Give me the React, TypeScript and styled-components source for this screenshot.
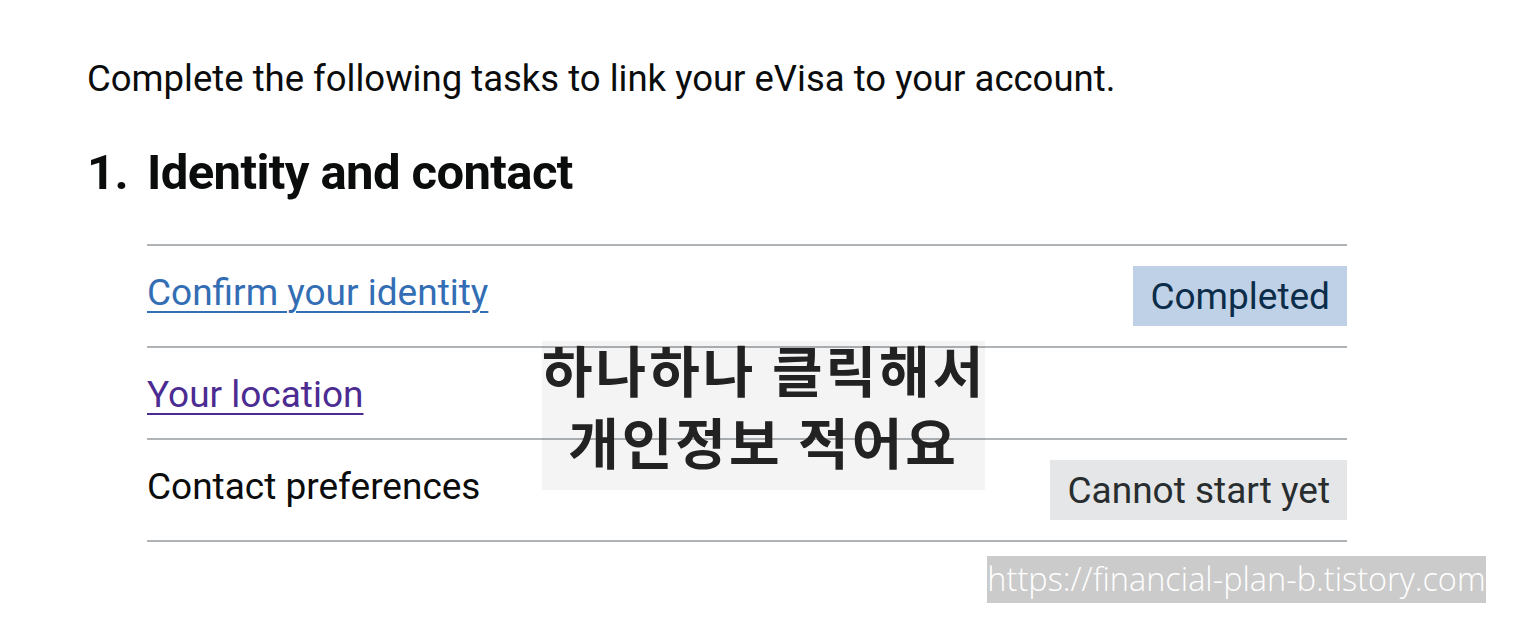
import React from 'react'
import styled, { createGlobalStyle } from 'styled-components'

const GlobalStyle = createGlobalStyle`
  html, body {
    margin: 0;
    padding: 0;
    background: #ffffff;
  }
  body {
    font-family: Roboto, "Noto Sans", Arial, sans-serif;
    color: #0b0c0c;
  }
`

const Page = styled.div`
  position: relative;
  width: 1526px;
  height: 644px;
  box-sizing: border-box;
  padding: 54px 0 0 87px;
  overflow: hidden;
`

const Intro = styled.p`
  margin: 0;
  font-size: 36.5px;
  line-height: 50px;
  color: #0b0c0c;
`

const SectionHeading = styled.h2`
  display: flex;
  margin: 39px 0 0;
  font-size: 49px;
  line-height: 60px;
  font-weight: 700;
  letter-spacing: -0.6px;
  color: #0b0c0c;
`

const SectionNumber = styled.span`
  width: 60px;
  flex-shrink: 0;
`

const TaskList = styled.ul`
  list-style: none;
  margin: 41px 0 0 60px;
  padding: 0;
  width: 1200px;
  border-top: 2px solid #b1b4b6;
`

const TaskItem = styled.li`
  display: flex;
  justify-content: space-between;
  align-items: flex-start;
  box-sizing: border-box;
  min-height: 92px;
  padding: 20px 0;
  border-bottom: 2px solid #b1b4b6;
`

const TaskName = styled.a<{ visited?: boolean }>`
  display: block;
  padding-top: 4px;
  font-size: 37px;
  line-height: 46px;
  color: ${({ visited }) => (visited ? '#4c2c92' : '#336eb5')};
  text-decoration: underline;
  text-decoration-thickness: 2px;
  text-underline-offset: 6px;
`

const TaskText = styled.span`
  display: block;
  padding-top: 4px;
  font-size: 37px;
  line-height: 46px;
  color: #0b0c0c;
`

const Tag = styled.strong<{ tone: 'blue' | 'grey' }>`
  display: block;
  height: 60px;
  padding: 0 17px;
  font-size: 37px;
  line-height: 62px;
  font-weight: 400;
  white-space: nowrap;
  background: ${({ tone }) => (tone === 'blue' ? '#bfd1e6' : '#e5e6e7')};
  color: ${({ tone }) => (tone === 'blue' ? '#0c2d4a' : '#282d30')};
`

const Caption = styled.div`
  position: absolute;
  left: 542px;
  top: 341px;
  width: 443px;
  height: 149px;
  background: rgba(0, 0, 0, 0.045);
  text-align: center;
  white-space: nowrap;
`

const CaptionLine = styled.div`
  height: 72px;
  margin-top: -9px;
  & + & {
    margin-top: 0;
  }
  font-family: "Noto Sans CJK KR", "Noto Sans", sans-serif;
  font-weight: 700;
  font-size: 55px;
  line-height: 72px;
  letter-spacing: 3px;
  color: #222222;
`

const Watermark = styled.div`
  position: absolute;
  left: 987px;
  top: 556px;
  width: 499px;
  height: 47px;
  background: #cbcbcb;
  color: #ffffff;
  font-family: "Open Sans", "Noto Sans", sans-serif;
  font-weight: 300;
  font-size: 32.5px;
  line-height: 46px;
  text-align: center;
  white-space: nowrap;
`

const tasks = [
  { name: 'Confirm your identity', link: true, visited: false, status: 'Completed', tone: 'blue' as const },
  { name: 'Your location', link: true, visited: true },
  { name: 'Contact preferences', link: false, status: 'Cannot start yet', tone: 'grey' as const },
]

export default function App() {
  return (
    <>
      <GlobalStyle />
      <Page>
        <Intro>Complete the following tasks to link your eVisa to your account.</Intro>
        <SectionHeading>
          <SectionNumber>1.</SectionNumber>
          Identity and contact
        </SectionHeading>
        <TaskList>
          {tasks.map((task) => (
            <TaskItem key={task.name}>
              {task.link ? (
                <TaskName href="#" visited={task.visited}>{task.name}</TaskName>
              ) : (
                <TaskText>{task.name}</TaskText>
              )}
              {task.status && <Tag tone={task.tone!}>{task.status}</Tag>}
            </TaskItem>
          ))}
        </TaskList>
        <Caption>
          <CaptionLine>하나하나 클릭해서</CaptionLine>
          <CaptionLine>개인정보 적어요</CaptionLine>
        </Caption>
        <Watermark>https://financial-plan-b.tistory.com</Watermark>
      </Page>
    </>
  )
}
